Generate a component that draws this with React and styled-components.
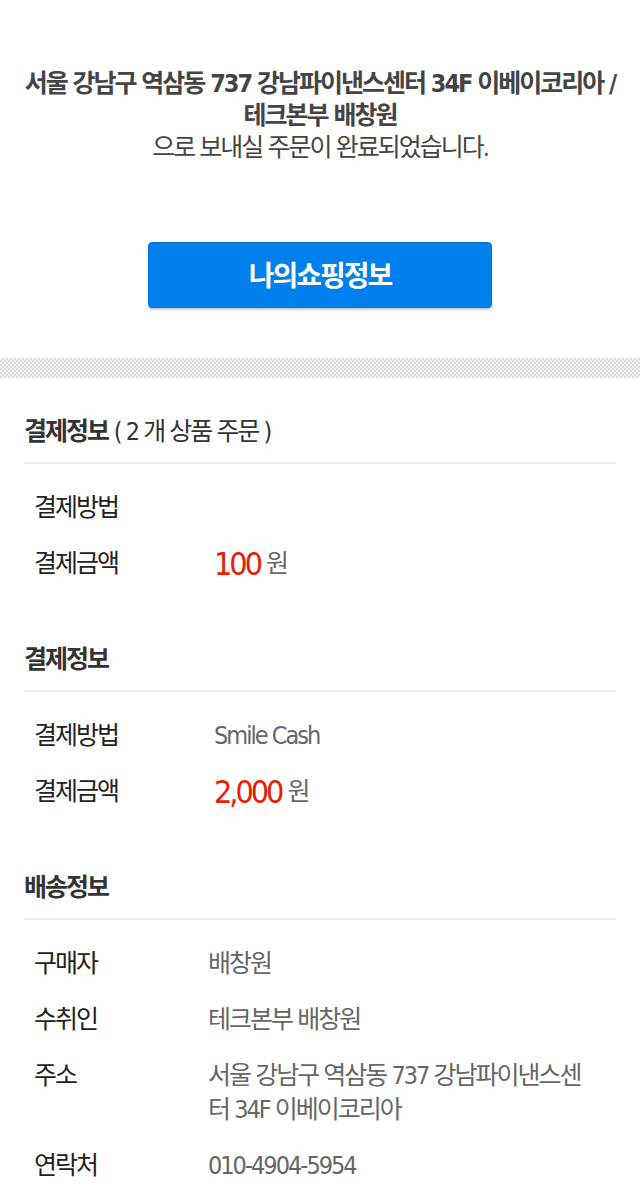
import React from 'react';
import styled, { createGlobalStyle, css } from 'styled-components';

const face = css`font-family: "DejaVu Sans Condensed", "Noto Sans CJK KR", sans-serif;`;
const Global = createGlobalStyle`
  * { box-sizing: border-box; }
  body { margin: 0; background: #fff; color: #222; ${face} font-size: 25px; line-height: 34px; letter-spacing: -2px; }
`;
const Complete = styled.section`
  padding: 68px 20px 50px;
  text-align: center;
`;
const Message = styled.p`
  margin: 0 0 78px;
  color: #444;
  line-height: 32px;
  word-break: keep-all;
`;
const Address = styled.strong`display: block; font-weight: 700;`;
const Button = styled.button`
  ${face}
  width: 344px;
  max-width: 100%;
  height: 66px;
  padding: 0 0 2px;
  border: 1px solid #0574d6;
  border-radius: 4px;
  background: #0080ec;
  box-shadow: 0 2px 2px #ccc;
  color: #fff;
  font-size: 28px;
  font-weight: 700;
  letter-spacing: -2px;
  vertical-align: top;
`;
const Divider = styled.div`
  height: 20px;
  background: repeating-conic-gradient(#dcdcdc 0 25%, #f0f0f0 0 50%) 0 0 / 4px 4px;
`;
const Content = styled.div`padding: 0 24px;`;
const Section = styled.section`
  padding-top: 36px;
  margin-bottom: 17px;
  &:last-child { margin-bottom: 0; }
`;
const Title = styled.h2`
  margin: 0 0 15px;
  padding-bottom: 12px;
  border-bottom: 2px solid #eee;
  color: #333;
  font-size: 25px;
  line-height: 36px;
  font-weight: 700;
`;
const Count = styled.span`font-weight: 400;`;
const List = styled.dl`
  display: grid;
  gap: 22px;
  margin: 0;
  padding: 12px 20px 8px 10px;
`;
const Row = styled.div`
  display: grid;
  grid-template-columns: ${p => p.$wide ? '180px' : '174px'} 1fr;
`;
const Label = styled.dt``;
const Value = styled.dd`margin: 0; color: #666; word-break: break-all;`;
const Amount = styled(Value)`display: flex; align-items: center; gap: 6px;`;
const Price = styled.em`
  color: #e52000;
  font-size: 32px;
  font-style: normal;
  letter-spacing: -3px;
`;

export default function App() {
  return <><Global /><main>
    <Complete>
      <Message><Address>서울 강남구 역삼동 737 강남파이낸스센터 34F 이베이코리아 / 테크본부 배창원</Address>으로 보내실 주문이 완료되었습니다.</Message>
      <Button type="button">나의쇼핑정보</Button>
    </Complete>
    <Divider />
    <Content>
      <Section><Title>결제정보 <Count>( 2 개 상품 주문 )</Count></Title><List>
        <Row $wide><Label>결제방법</Label><Value /></Row>
        <Row $wide><Label>결제금액</Label><Amount><Price>100</Price><span>원</span></Amount></Row>
      </List></Section>
      <Section><Title>결제정보</Title><List>
        <Row $wide><Label>결제방법</Label><Value>Smile Cash</Value></Row>
        <Row $wide><Label>결제금액</Label><Amount><Price>2,000</Price><span>원</span></Amount></Row>
      </List></Section>
      <Section><Title>배송정보</Title><List>
        <Row><Label>구매자</Label><Value>배창원</Value></Row>
        <Row><Label>수취인</Label><Value>테크본부 배창원</Value></Row>
        <Row><Label>주소</Label><Value>서울 강남구 역삼동 737 강남파이낸스센터 34F 이베이코리아</Value></Row>
        <Row><Label>연락처</Label><Value>010-4904-5954</Value></Row>
      </List></Section>
    </Content>
  </main></>;
}
